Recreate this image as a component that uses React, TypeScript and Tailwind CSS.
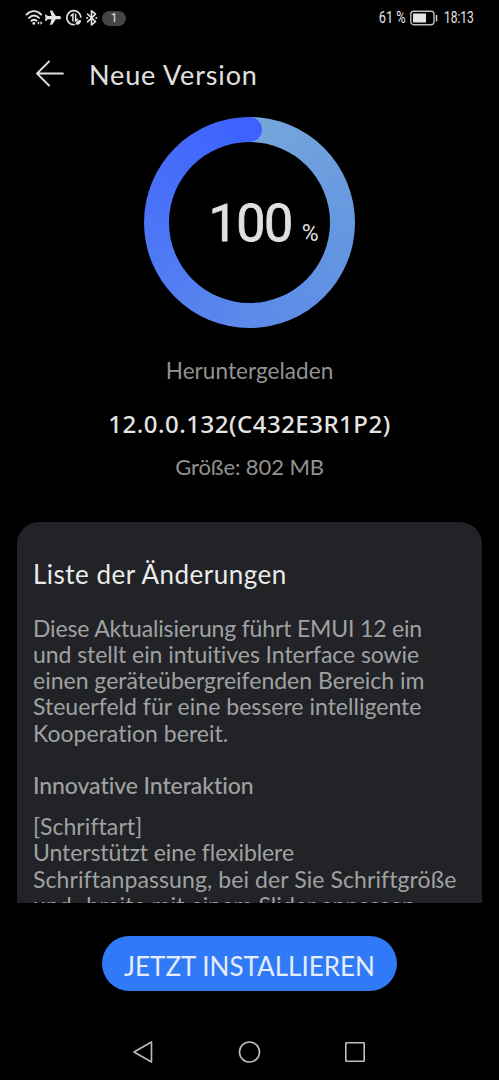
const intro = [
  { text: 'Diese Aktualisierung führt EMUI 12 ein', className: 'tracking-[-0.17px]' },
  { text: 'und stellt ein intuitives Interface sowie', className: 'tracking-[-0.06px]' },
  { text: 'einen geräteübergreifenden Bereich im', className: 'tracking-normal' },
  { text: 'Steuerfeld für eine bessere intelligente', className: 'tracking-[0.02px]' },
  { text: 'Kooperation bereit.', className: 'tracking-[0.03px]' },
]

const details = [
  { text: '[Schriftart]', className: 'tracking-[0.08px]' },
  { text: 'Unterstützt eine flexiblere', className: 'tracking-[-0.08px]' },
  { text: 'Schriftanpassung, bei der Sie Schriftgröße', className: 'tracking-[0.09px]' },
  { text: 'und -breite mit einem Slider anpassen.', className: 'tracking-[0.08px]' },
]

function StatusBar() {
  return (
    <div className="flex h-9 shrink-0 items-center justify-between pl-[25px] pr-[25px] text-[#e4e4e4]">
      <div className="flex items-center">
        <svg width="78" height="18" viewBox="0 0 78 18" fill="none" stroke="currentColor" strokeWidth="1.9" strokeLinecap="round">
          <path d="M1.500 5.600C6 1 12 1 16.200 5.600M4 8.800c3-3 7-3 10 0M6.500 11.800c1.600-1.500 3.400-1.500 5 0" />
          <circle cx="8.800" cy="14.400" r="1.400" fill="currentColor" stroke="none" />
          <path d="M14.200 12.300l-2 1.700 2 1.700zM15.400 12.300l2.200 1.700-2.200 1.700z" fill="currentColor" stroke="none" />
          <path d="M36 8.700c0-1.100-1-1.600-2-1.600h-3.200L27.200 1.600H25l1.500 5.500h-3.800L21.200 5.400H20l.5 3.300-.5 3.300h1.200l1.500-1.700h3.800L25 15.800h2.200l3.600-5.500H34c1 0 2-.5 2-1.600z" fill="currentColor" stroke="none" />
          <path d="M49 15.700A7 7 0 1 1 55.800 8" strokeWidth="1.700" />
          <path d="M46 6.800l1.900-1.600V12M50.600 5.200V12l1.900-1.600" strokeWidth="1.500" />
          <path d="M50.500 15.600c0-3 2-4.700 5.500-4.700 0 3.500-2 5.400-5.500 4.700z" fill="currentColor" stroke="none" />
          <path d="M62.500 5l8 7.600-4 3.400V1.800l4 3.400-8 7.600" strokeWidth="1.600" strokeLinejoin="round" />
          <path d="M62 8.900h.3M71.200 8.900h.3" strokeWidth="1.800" />
        </svg>
        <span className="-ml-px flex h-[15px] w-6 items-center justify-center rounded-full bg-[#454545] font-['Roboto',sans-serif] text-[12px]">1</span>
      </div>
      <div className="flex items-center font-['Roboto',sans-serif] text-[16px] leading-4">
        <span className="origin-right scale-x-80">61 %</span>
        <svg className="ml-[4px]" width="28" height="16" viewBox="0 0 28 16">
          <rect x="0.800" y="1.300" width="23.200" height="13.400" rx="3" fill="none" stroke="#bcbcbc" strokeWidth="1.400" />
          <rect x="3" y="3.500" width="13" height="9" rx="0.500" fill="#e4e4e4" />
          <path d="M26.500 5v6.500" stroke="#d0d0d0" strokeWidth="1.500" />
        </svg>
        <span className="-ml-[4px] origin-right scale-x-75">18:13</span>
      </div>
    </div>
  )
}

function ProgressRing() {
  return (
    <div className="relative flex size-[211px] items-center justify-center rounded-full bg-[conic-gradient(#76a7da_0deg,#6698e0_90deg,#5c8aea_180deg,#4b74f7_270deg,#3c62ff_360deg)]">
      <span className="absolute left-[93px] top-0 size-[25px] rounded-full bg-[#3c62ff]" />
      <div className="relative flex size-[161px] items-baseline justify-center rounded-full bg-black pl-7 pt-[46px] font-['Roboto',sans-serif] text-[#e0e0e0]">
        <span className="text-[52px] leading-[72px] tracking-[-1.500px] [-webkit-text-stroke:0.8px_#e0e0e0]">100</span>
        <span className="ml-[10px] text-[23px]">%</span>
      </div>
    </div>
  )
}

function NavBar() {
  return (
    <div className="mt-auto flex h-14 shrink-0 items-center justify-center gap-[82px] pr-[2px] text-[#bdbdbd]">
      <svg width="24" height="24" viewBox="0 0 24 24" fill="none" stroke="currentColor" strokeWidth="1.600" strokeLinejoin="round">
        <path d="M20.500 2v20L3 12z" />
      </svg>
      <svg width="24" height="24" viewBox="0 0 24 24" fill="none" stroke="currentColor" strokeWidth="1.600">
        <circle cx="12.500" cy="12" r="10" />
      </svg>
      <svg width="24" height="24" viewBox="0 0 24 24" fill="none" stroke="currentColor" strokeWidth="1.600" strokeLinejoin="round">
        <rect x="2.800" y="2.800" width="18.400" height="18.400" rx="0.500" />
      </svg>
    </div>
  )
}

export default function App() {
  return (
    <div className="flex h-[1080px] w-[499px] flex-col overflow-hidden bg-black font-['Lato',sans-serif] whitespace-nowrap">
      <StatusBar />
      <header className="mt-[22px] flex h-8 shrink-0 items-center pl-9 text-[#e0e0e0]">
        <svg width="28" height="28" viewBox="0 0 28 28" fill="none" stroke="currentColor" strokeWidth="1.800" strokeLinecap="round" strokeLinejoin="round">
          <path d="M27 13.500H1M13 1.500L1 13.500l12 12" />
        </svg>
        <h1 className="ml-[25px] pt-0.5 text-[27px] leading-8 tracking-[0.850px]">Neue Version</h1>
      </header>
      <section className="mt-[27px] flex shrink-0 flex-col items-center">
        <ProgressRing />
        <p className="mt-[29px] text-[22.500px] leading-7 tracking-[0.060px] text-[#929292]">Heruntergeladen</p>
        <p className="mt-[23px] font-['Noto_Sans',sans-serif] text-[24px] font-medium leading-8 tracking-[0.500px] text-[#e4e4e4]">12.0.0.132(C432E3R1P2)</p>
        <p className="mt-[13px] text-[22px] leading-7 tracking-[-0.100px] text-[#929292]">Größe: 802 MB</p>
      </section>
      <section className="ml-[17px] mt-[41px] h-[381px] w-[465px] shrink-0 overflow-hidden rounded-t-[22px] bg-[#222326] px-[16px] pt-[36px] text-[23px] leading-[26.250px] text-[#a0a1a2]">
        <h2 className="text-[26px] leading-8 tracking-[0.500px] text-[#eaeaea]">Liste der Änderungen</h2>
        <div className="mt-[24.500px]">
          {intro.map((line) => (
            <p key={line.text}><span className={line.className}>{line.text}</span></p>
          ))}
        </div>
        <h3 className="mt-[26px] font-medium tracking-[-0.080px]">Innovative Interaktion</h3>
        <div className="mt-[15px]">
          {details.map((line) => (
            <p key={line.text}><span className={line.className}>{line.text}</span></p>
          ))}
        </div>
      </section>
      <button className="mx-auto mt-[33px] flex h-[55px] w-[295px] shrink-0 items-center justify-center rounded-full bg-[#317af7] pt-[5px] text-[26px] text-[#e4edfd]">
        JETZT INSTALLIEREN
      </button>
      <NavBar />
    </div>
  )
}
